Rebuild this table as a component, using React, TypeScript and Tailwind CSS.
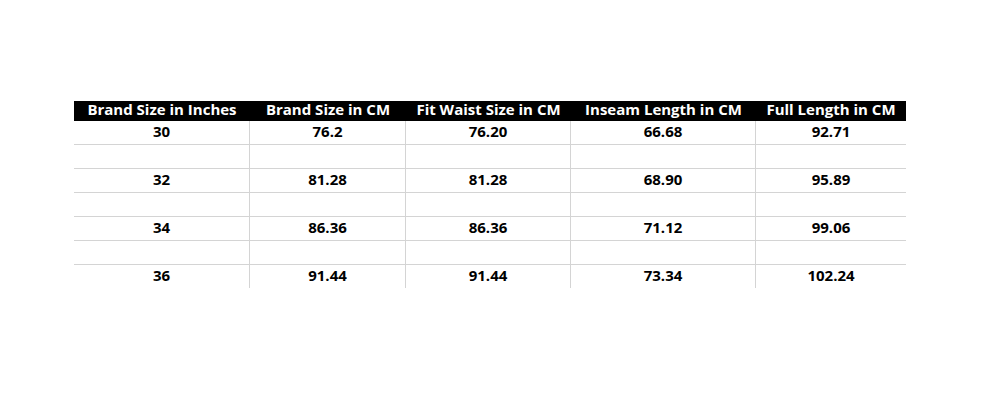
const headers = [
  'Brand Size in Inches',
  'Brand Size in CM',
  'Fit Waist Size in CM',
  'Inseam Length in CM',
  'Full Length in CM',
];

const rows: string[][] = [
  ['30', '76.2', '76.20', '66.68', '92.71'],
  ['', '', '', '', ''],
  ['32', '81.28', '81.28', '68.90', '95.89'],
  ['', '', '', '', ''],
  ['34', '86.36', '86.36', '71.12', '99.06'],
  ['', '', '', '', ''],
  ['36', '91.44', '91.44', '73.34', '102.24'],
];

export default function App() {
  return (
    <div
      className="w-[1000px] h-[400px] bg-white pt-[101px] pl-[74px]"
      style={{ fontFamily: '"Open Sans", "Noto Sans", sans-serif' }}
    >
      <div className="w-[832px] grid grid-cols-[176px_156px_165px_185px_150px]">
        {headers.map((h) => (
          <div
            key={h}
            className="h-[20px] pb-[3px] bg-black text-white font-bold text-[15px] leading-none flex items-center justify-center whitespace-nowrap"
          >
            {h}
          </div>
        ))}
        {rows.map((row, ri) =>
          row.map((cell, ci) => (
            <div
              key={`${ri}-${ci}`}
              className={[
                'flex items-center justify-center pb-[2px] font-bold text-[15px] leading-none text-black border-[#d4d4d4]',
                ri < rows.length - 1 ? 'h-[24px] border-b' : 'h-[23px]',
                ci < row.length - 1 ? 'border-r' : '',
              ].join(' ')}
            >
              {cell}
            </div>
          ))
        )}
      </div>
    </div>
  );
}
